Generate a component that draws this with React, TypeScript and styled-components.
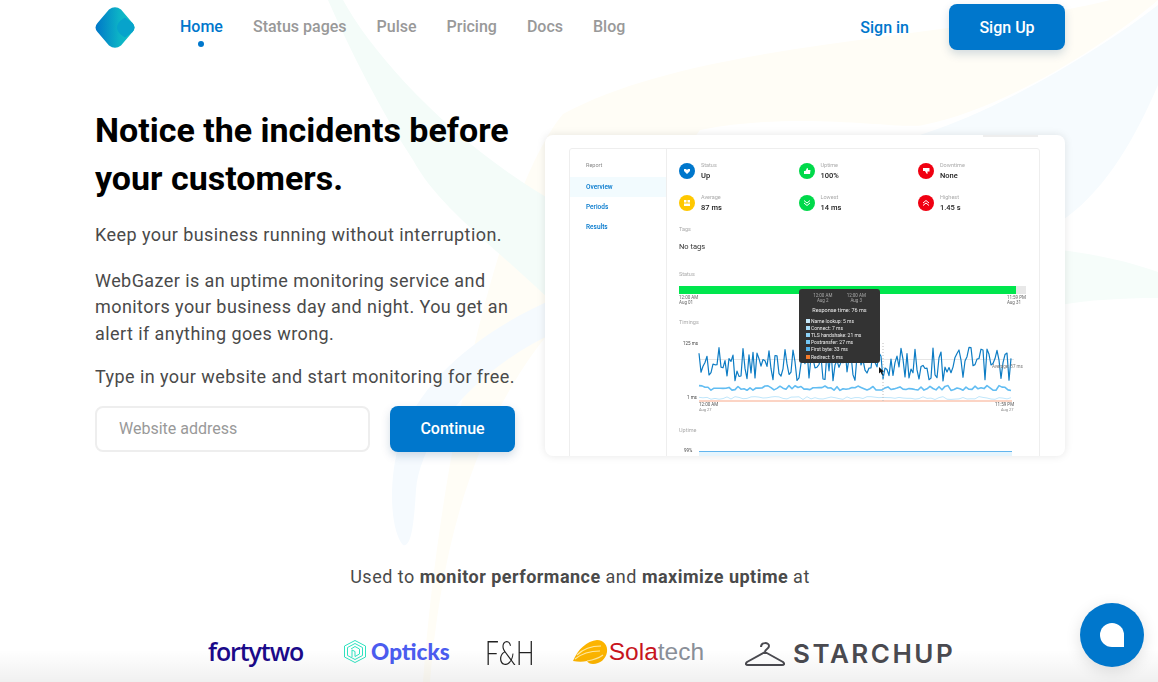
import React from "react"
import styled, { createGlobalStyle } from "styled-components"

const BLUE = "#0077cc"

const GlobalStyle = createGlobalStyle`
    html, body {
        margin: 0;
        padding: 0;
        background: #fff;
        font-family: Roboto, "Liberation Sans", sans-serif;
    }
    * { box-sizing: border-box; }
`

const Page = styled.div`
    position: relative;
    width: 1158px;
    height: 682px;
    overflow: hidden;
    background: #fff;
`
const Backdrop = styled.svg`
    position: absolute;
    left: 0;
    top: 0;
`
const Content = styled.div`
    position: relative;
    padding: 0 93px 0 95px;
`
const Header = styled.header`
    display: flex;
    align-items: flex-start;
    height: 54px;
`
const LogoBox = styled.div`
    width: 40px;
    height: 41px;
    margin-top: 7px;
`
const Nav = styled.nav`
    display: flex;
    gap: 30px;
    margin-left: 45px;
    margin-top: 17px;
`
const NavItem = styled.a<{ $active?: boolean }>`
    position: relative;
    font-size: 16px;
    line-height: 19px;
    font-weight: 500;
    color: ${p => (p.$active ? BLUE : "#999")};
    &::after {
        content: "";
        display: ${p => (p.$active ? "block" : "none")};
        position: absolute;
        left: 50%;
        bottom: -11px;
        width: 6px;
        height: 6px;
        margin-left: -3px;
        border-radius: 50%;
        background: ${BLUE};
    }
`
const HeaderRight = styled.div`
    display: flex;
    align-items: center;
    gap: 40px;
    margin-left: auto;
    margin-top: 4px;
`
const SignIn = styled.a`
    font-size: 16px;
    font-weight: 500;
    color: ${BLUE};
`
const PrimaryButton = styled.button<{ $width: number }>`
    width: ${p => p.$width}px;
    height: 46px;
    border: none;
    border-radius: 8px;
    background: ${BLUE};
    color: #fff;
    font-family: inherit;
    font-size: 16px;
    font-weight: 500;
    box-shadow: 0 4px 10px rgba(0, 60, 110, 0.18);
`
const Hero = styled.section`
    display: flex;
    justify-content: space-between;
    align-items: flex-start;
    margin-top: 52px;
`
const HeroText = styled.div`
    width: 422px;
`
const Title = styled.h1`
    margin: 0 0 20px;
    font-size: 34px;
    line-height: 48px;
    font-weight: 700;
    color: #000;
`
const Lead = styled.p<{ $gap: number }>`
    margin: 0 0 ${p => p.$gap}px;
    font-size: 18px;
    line-height: 26.5px;
    letter-spacing: 0.43px;
    color: #4a4a4a;
`
const SignupForm = styled.div`
    display: flex;
    gap: 20px;
`
const AddressInput = styled.input`
    width: 275px;
    height: 46px;
    padding: 0 22px;
    border: 2px solid #eee;
    border-radius: 8px;
    background: transparent;
    font-family: inherit;
    font-size: 16px;
    &::placeholder { color: #999; }
`

const MockCard = styled.div`
    position: relative;
    width: 520px;
    height: 321px;
    margin-top: 29px;
    padding: 13px 25px 0 24px;
    overflow: hidden;
    border-radius: 8px;
    background: #fff;
    box-shadow: 0 0 8px rgba(0, 0, 0, 0.1);
`
const MockTab = styled.div`
    position: absolute;
    top: 0;
    right: 27px;
    width: 55px;
    height: 2px;
    background: #eee;
`
const MockPanel = styled.div`
    display: flex;
    height: 320px;
    border: 1px solid #eee;
    border-radius: 3px 3px 0 0;
    filter: blur(0.3px);
`
const MockSide = styled.div`
    width: 97px;
    flex: none;
    padding-top: 12px;
    border-right: 1px solid #eee;
`
const SideHeading = styled.div`
    padding-left: 16px;
    margin-bottom: 8px;
    font-size: 5.5px;
    line-height: 8px;
    color: #888;
`
const SideLink = styled.div<{ $active?: boolean }>`
    height: 20px;
    padding-left: 16px;
    font-size: 6.5px;
    line-height: 20px;
    font-weight: 500;
    color: ${BLUE};
    background: ${p => (p.$active ? "#f2fbfe" : "transparent")};
`
const MockMain = styled.div`
    flex: 1;
    padding: 14px 12px 0;
`
const StatGrid = styled.div`
    display: grid;
    grid-template-columns: repeat(3, 119.5px);
    row-gap: 16px;
`
const Stat = styled.div`
    display: flex;
    align-items: center;
    gap: 6px;
    height: 16px;
`
const StatDot = styled.div<{ $color: string }>`
    display: flex;
    align-items: center;
    justify-content: center;
    width: 16px;
    height: 16px;
    border-radius: 50%;
    background: ${p => p.$color};
`
const StatLabel = styled.div`
    font-size: 5.5px;
    line-height: 7px;
    color: #aaa;
`
const StatValue = styled.div`
    margin-top: 2px;
    font-size: 7.5px;
    line-height: 9px;
    font-weight: 500;
    color: #222;
`
const SectionLabel = styled.div<{ $top: number }>`
    margin-top: ${p => p.$top}px;
    font-size: 5.5px;
    line-height: 7px;
    color: #aaa;
`
const NoTags = styled.div`
    margin-top: 9px;
    font-size: 7.5px;
    line-height: 9px;
    color: #333;
`
const StatusBar = styled.div`
    width: 347px;
    height: 8px;
    margin-top: 8px;
    background: #e8e8e8;
`
const StatusFill = styled.div`
    width: 337px;
    height: 8px;
    background: #00e64d;
`
const AxisRow = styled.div`
    display: flex;
    justify-content: space-between;
    width: 347px;
    margin-top: 1px;
`
const AxisText = styled.div`
    font-size: 4.5px;
    line-height: 5px;
    color: #666;
`
const ChartSvg = styled.svg`
    display: block;
    margin-top: 8px;
`
const UptimeBand = styled.div`
    position: relative;
    width: 313px;
    height: 12px;
    margin: 17px 0 0 20px;
    border-top: 1px solid #62b5ee;
    background: #e6f5fd;
`
const UptimeTick = styled.span`
    position: absolute;
    left: -15px;
    top: -4px;
    font-size: 4.5px;
    color: #444;
`
const Tip = styled.div`
    position: absolute;
    left: 254px;
    top: 154px;
    width: 81px;
    height: 74px;
    padding: 4px 7px 0;
    border-radius: 3px;
    background: #333;
    color: #ddd;
    filter: blur(0.25px);
`
const TipDates = styled.div`
    display: flex;
    justify-content: space-around;
    font-size: 4.5px;
    line-height: 5px;
    text-align: center;
    color: #aaa;
`
const TipTitle = styled.div`
    margin: 4px 0 3px;
    font-size: 5.5px;
    line-height: 7px;
    text-align: center;
    color: #eee;
`
const TipRow = styled.div`
    display: flex;
    align-items: center;
    gap: 1px;
    height: 7.2px;
    font-size: 5px;
    color: #eee;
`
const TipSwatch = styled.i<{ $color: string }>`
    width: 4px;
    height: 4px;
    background: ${p => p.$color};
`

const ProofLine = styled.p`
    margin: 110px 0 0;
    font-size: 18px;
    line-height: 22px;
    letter-spacing: 0.48px;
    text-align: center;
    color: #4a4a4a;
    b { font-weight: 700; }
`
const LogoRow = styled.div`
    display: flex;
    align-items: center;
    height: 30px;
    margin: 48px 0 0 113px;
`
const Fortytwo = styled.span`
    margin-right: 41px;
    font-family: "Open Sans", sans-serif;
    font-size: 25px;
    line-height: 30px;
    font-weight: 600;
    letter-spacing: -1.1px;
    color: #1b0a8a;
`
const LogoGroup = styled.span<{ $gap: number; $after: number; $drop?: number }>`
    display: flex;
    align-items: center;
    gap: ${p => p.$gap}px;
    margin-top: ${p => p.$drop ?? 0}px;
    margin-right: ${p => p.$after}px;
`
const Opticks = styled.span`
    font-family: Lato, sans-serif;
    font-size: 22.5px;
    font-weight: 900;
    color: #4b5cf0;
`
const FandH = styled.span`
    width: 45px;
    margin-right: 43px;
    font-family: Lato, sans-serif;
    font-size: 34px;
    font-weight: 300;
    color: #222;
    white-space: nowrap;
    transform: scaleX(0.72);
    transform-origin: left center;
`
const Solatech = styled.span`
    font-family: "Liberation Sans", sans-serif;
    font-size: 24.5px;
    color: #8a8f98;
    b { font-weight: 400; color: #c8141c; }
`
const Starchup = styled.span`
    font-family: Inter, sans-serif;
    font-size: 26px;
    font-weight: 600;
    letter-spacing: 2.5px;
    color: #4a4a50;
`
const BottomFade = styled.div`
    position: absolute;
    left: 0;
    right: 0;
    bottom: 0;
    height: 32px;
    background: linear-gradient(rgba(0, 0, 0, 0), rgba(0, 0, 0, 0.06));
`
const ChatButton = styled.button`
    position: absolute;
    left: 1080px;
    top: 603px;
    display: flex;
    align-items: center;
    justify-content: center;
    width: 64px;
    height: 64px;
    border: none;
    border-radius: 50%;
    background: ${BLUE};
    box-shadow: 0 4px 16px rgba(0, 0, 0, 0.12);
`
const ChatBubble = styled.span`
    width: 24px;
    height: 24px;
    border-radius: 50% 50% 0 50%;
    background: #fff;
`

// repeatable noise so the chart looks the same on every load
const noise = (i: number, seed: number) => {
    const v = Math.sin(i * 12.9898 + seed * 78.233) * 43758.5453
    return v - Math.floor(v)
}
const series = (base: number, spread: number, step: number, seed: number) => {
    const pts: string[] = []
    for (let x = 20, i = 0; x <= 333; x += step, i++) {
        pts.push(`${x.toFixed(1)},${(base + (noise(i, seed) - 0.5) * spread).toFixed(1)}`)
    }
    return pts.join(" ")
}

const stats = [
    { color: BLUE, label: "Status", value: "Up", icon: "heart" },
    { color: "#00d94a", label: "Uptime", value: "100%", icon: "up" },
    { color: "#f00011", label: "Downtime", value: "None", icon: "down" },
    { color: "#ffc800", label: "Average", value: "87 ms", icon: "grid" },
    { color: "#00d94a", label: "Lowest", value: "14 ms", icon: "lower" },
    { color: "#f00011", label: "Highest", value: "1.45 s", icon: "higher" },
]

const StatIcon = ({ name }: { name: string }) => (
    <svg width="10" height="10" viewBox="0 0 10 10" fill="#fff" stroke="#fff" strokeWidth="1">
        {name === "heart" && <path d="M5 8 2 5V3h2l1 1 1-1h2v2z" stroke="none" />}
        {name === "up" && <path d="M2 5h1.500L5 2l1 .5V4h2.500L8 8H2z" stroke="none" />}
        {name === "down" && <path d="M2 2h6.500v3.500H6.500V8l-1-.5L4 5H2z" stroke="none" />}
        {name === "grid" && <path d="M2 2h2.500v2.500H2zM5.500 2H8v2.500H5.500zM2 5.500h6V8H2z" stroke="none" />}
        {name === "lower" && <path d="M2 2.500 5 5l3-2.500M2 5 5 7.500 8 5" fill="none" />}
        {name === "higher" && <path d="M2 5 5 2.500 8 5M2 7.500 5 5l3 2.500" fill="none" />}
    </svg>
)

const tipRows = [
    { color: "#c6e9fb", text: "Name lookup: 5 ms" },
    { color: "#a9def9", text: "Connect: 7 ms" },
    { color: "#8fd3f7", text: "TLS handshake: 21 ms" },
    { color: "#74c7f5", text: "Postransfer: 27 ms" },
    { color: "#55b4ee", text: "First byte: 33 ms" },
    { color: "#f47a2a", text: "Redirect: 6 ms" },
]

export default function App() {
    return (
        <Page>
            <GlobalStyle />
            <Backdrop width="1158" height="682" viewBox="0 0 1158 682" fill="none">
                <path d="M1110 0C950 40 700 40 563 114C500 190 440 450 423 682H430C440 560 470 420 560 320L700 130C800 110 900 130 923 125C1000 110 1100 50 1158 0Z" fill="#fffdf6" />
                <path d="M328 0H343C370 50 440 130 533 189L600 230 560 310C500 250 440 210 413 160 380 110 350 50 328 0Z" fill="#f4fcf9" />
                <path d="M560 296C480 330 420 380 400 440C388 480 390 530 403 545C412 548 414 520 416 490C420 440 470 370 560 330Z" fill="#f5fafe" />
                <path d="M920 135C1000 110 1100 50 1158 5V85C1130 150 1100 195 1060 222Z" fill="#f6fbfe" />
                <path d="M1060 250C1100 255 1130 262 1158 272V298C1120 298 1090 300 1060 305Z" fill="#f6fdfa" />
            </Backdrop>
            <Content>
                <Header>
                    <LogoBox>
                        <svg width="40" height="41" viewBox="0 0 40 41">
                            <defs>
                                <linearGradient id="logoFill" x1="0" y1="0" x2="1" y2="0">
                                    <stop offset="0" stopColor="#0077c8" />
                                    <stop offset="0.6" stopColor="#0cb2c6" />
                                    <stop offset="1" stopColor="#12c2c4" />
                                </linearGradient>
                            </defs>
                            <path d="M14 2.500Q20 -2 26 2.500L37.500 16Q41.500 20.500 37.500 25L26 38.500Q20 43 14 38.500L2.500 25Q-1.500 20.500 2.500 16Z" fill="url(#logoFill)" />
                            <path d="M30 10.500 37.500 16Q41.500 20.500 37.500 25L30 30.500C26 28 22 25 22 20.500 22 16 26 13 30 10.500Z" fill="#07a3cb" />
                        </svg>
                    </LogoBox>
                    <Nav>
                        <NavItem $active>Home</NavItem>
                        <NavItem>Status pages</NavItem>
                        <NavItem>Pulse</NavItem>
                        <NavItem>Pricing</NavItem>
                        <NavItem>Docs</NavItem>
                        <NavItem>Blog</NavItem>
                    </Nav>
                    <HeaderRight>
                        <SignIn>Sign in</SignIn>
                        <PrimaryButton $width={116}>Sign Up</PrimaryButton>
                    </HeaderRight>
                </Header>
                <Hero>
                    <HeroText>
                        <Title>Notice the incidents before your customers.</Title>
                        <Lead $gap={19}>Keep your business running without interruption.</Lead>
                        <Lead $gap={17}>WebGazer is an uptime monitoring service and monitors your business day and night. You get an alert if anything goes wrong.</Lead>
                        <Lead $gap={15}>Type in your website and start monitoring for free.</Lead>
                        <SignupForm>
                            <AddressInput placeholder="Website address" />
                            <PrimaryButton $width={125}>Continue</PrimaryButton>
                        </SignupForm>
                    </HeroText>
                    <MockCard>
                        <MockTab />
                        <MockPanel>
                            <MockSide>
                                <SideHeading>Report</SideHeading>
                                <SideLink $active>Overview</SideLink>
                                <SideLink>Periods</SideLink>
                                <SideLink>Results</SideLink>
                            </MockSide>
                            <MockMain>
                                <StatGrid>
                                    {stats.map(s => (
                                        <Stat key={s.label}>
                                            <StatDot $color={s.color}><StatIcon name={s.icon} /></StatDot>
                                            <div>
                                                <StatLabel>{s.label}</StatLabel>
                                                <StatValue>{s.value}</StatValue>
                                            </div>
                                        </Stat>
                                    ))}
                                </StatGrid>
                                <SectionLabel $top={15}>Tags</SectionLabel>
                                <NoTags>No tags</NoTags>
                                <SectionLabel $top={20}>Status</SectionLabel>
                                <StatusBar><StatusFill /></StatusBar>
                                <AxisRow>
                                    <AxisText>12:00 AM<br />Aug 01</AxisText>
                                    <AxisText>11:59 PM<br />Aug 31</AxisText>
                                </AxisRow>
                                <SectionLabel $top={14}>Timings</SectionLabel>
                                <ChartSvg width="347" height="82" viewBox="0 0 347 82" fill="none">
                                    <line x1="20" x2="335" y1="25.500" y2="25.500" stroke="#e6e6e6" />
                                    <polyline points={series(30, 34, 2, 1)} stroke="#0d7cc4" strokeWidth="1.200" strokeLinejoin="round" />
                                    <polyline points={series(54, 5, 3, 2)} stroke="#62bdf2" strokeWidth="1.600" strokeLinejoin="round" />
                                    <polyline points={series(64, 3, 4, 3)} stroke="#bfe6fb" strokeWidth="1" />
                                    <line x1="20" x2="333" y1="67" y2="67" stroke="#f9a98a" />
                                    <line x1="204" x2="204" y1="9" y2="67" stroke="#bbb" strokeDasharray="1 2" />
                                    <text x="4" y="11" fontSize="4.500" fill="#444" fontFamily="Roboto">125 ms</text>
                                    <text x="8" y="65" fontSize="4.500" fill="#444" fontFamily="Roboto">1 ms</text>
                                    <text x="20" y="72" fontSize="4.500" fill="#555" fontFamily="Roboto">12:00 AM</text>
                                    <text x="20" y="77" fontSize="4" fill="#888" fontFamily="Roboto">Aug 27</text>
                                    <text x="316" y="72" fontSize="4.500" fill="#555" fontFamily="Roboto">11:59 PM</text>
                                    <text x="322" y="77" fontSize="4" fill="#888" fontFamily="Roboto">Aug 27</text>
                                    <text x="313" y="34" fontSize="4.500" fill="#777" fontFamily="Roboto">Average: 87 ms</text>
                                    <path d="M200 33V39.500L201.500 38 203 41 204 40.500 202.800 37.800H205Z" fill="#111" />
                                </ChartSvg>
                                <SectionLabel $top={11}>Uptime</SectionLabel>
                                <UptimeBand><UptimeTick>99%</UptimeTick></UptimeBand>
                            </MockMain>
                        </MockPanel>
                        <Tip>
                            <TipDates>
                                <span>12:00 AM<br />Aug 2</span>
                                <span>12:00 AM<br />Aug 3</span>
                            </TipDates>
                            <TipTitle>Response time: 76 ms</TipTitle>
                            {tipRows.map(r => (
                                <TipRow key={r.text}><TipSwatch $color={r.color} />{r.text}</TipRow>
                            ))}
                        </Tip>
                    </MockCard>
                </Hero>
                <ProofLine>Used to <b>monitor performance</b> and <b>maximize uptime</b> at</ProofLine>
                <LogoRow>
                    <Fortytwo>fortytwo</Fortytwo>
                    <LogoGroup $gap={5} $after={35}>
                        <svg width="22" height="23" viewBox="0 0 22 23" fill="none" stroke="#2fe3c0" strokeWidth="1">
                            <path d="M11 .5 21.500 6V17L11 22.500 .5 17V6Z" />
                            <path d="M11 3.500 18.500 7.500V15.500L11 19.500 3.500 15.500V7.500Z" />
                            <path d="M7 9 11 6.500 15.500 9V14L11 16.500V11.500L8 10V17" />
                        </svg>
                        <Opticks>Opticks</Opticks>
                    </LogoGroup>
                    <FandH>F&amp;H</FandH>
                    <LogoGroup $gap={0} $after={41} $drop={2}>
                        <svg width="36" height="24" viewBox="0 0 36 24">
                            <path d="M0 21C5 9 14 1 24 0 31 0 35 6 34 12 33 19 27 24 20 24 17 24 15 23 14 21 10 22 5 22 0 21Z" fill="#fcb400" />
                            <path d="M2 19C8 14 16 11 27 11M4 15C10 9 18 6 28 6M14 21C20 20 26 18 30 15" fill="none" stroke="#ffe9a0" strokeWidth="1.200" />
                        </svg>
                        <Solatech><b>Sola</b>tech</Solatech>
                    </LogoGroup>
                    <LogoGroup $gap={8} $after={0} $drop={5}>
                        <svg width="40" height="26" viewBox="0 0 40 26" fill="none" stroke="#4a4a50" strokeWidth="2" strokeLinejoin="round">
                            <path d="M16 6C16 1 24 1 24 5 24 8 20 8 20 11L38 21C40 23 39 24 37 24H3C1 24 0 23 2 21L20 11" />
                        </svg>
                        <Starchup>STARCHUP</Starchup>
                    </LogoGroup>
                </LogoRow>
            </Content>
            <BottomFade />
            <ChatButton aria-label="Chat"><ChatBubble /></ChatButton>
        </Page>
    )
}
